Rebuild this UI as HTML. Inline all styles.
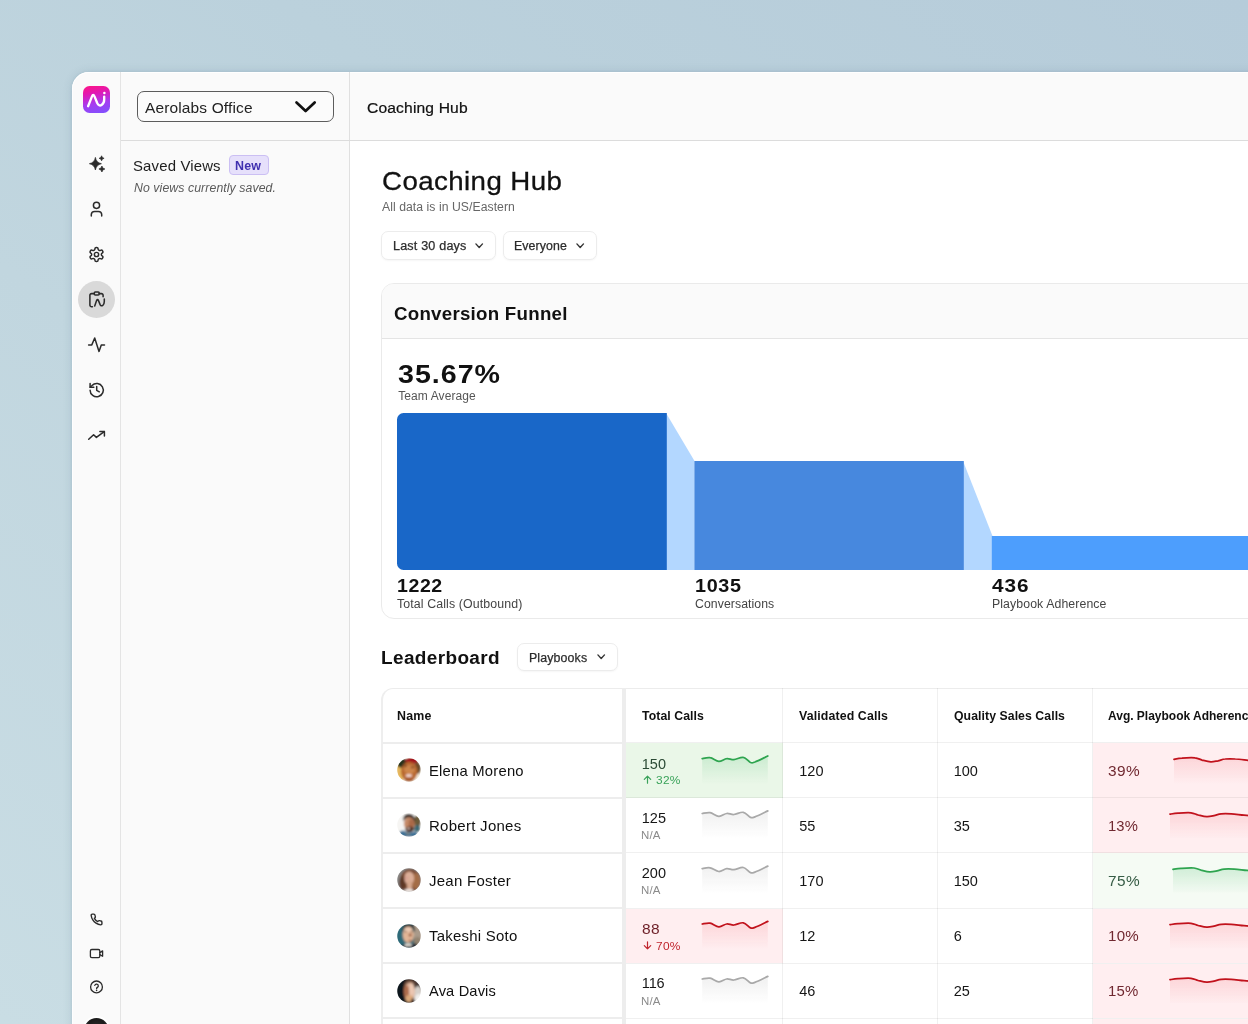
<!DOCTYPE html>
<html lang="en">
<head>
<meta charset="utf-8">
<title>Coaching Hub</title>
<style>
*{box-sizing:border-box;margin:0;padding:0}
html,body{width:1248px;height:1024px;overflow:hidden}
body{font-family:"Liberation Sans",Arial,sans-serif;color:#111;background:linear-gradient(38deg,#c9dde4 0%,#c1d6df 38%,#bbd1dc 62%,#b6ccda 100%);position:relative}
.abs{position:absolute}
.t{position:absolute;white-space:nowrap;line-height:1}
#win{position:absolute;left:72px;top:72px;width:1300px;height:1100px;background:#fafafa;border-radius:17px 0 0 0;box-shadow:0 0 10px rgba(50,85,115,.15),0 0 3px rgba(50,85,115,.09),inset 0 1px 0 #fff,inset 1px 0 0 rgba(255,255,255,.8);overflow:hidden}
#rail{position:absolute;left:0;top:0;width:49px;height:100%;border-right:1px solid #e4e4e4}
#side{position:absolute;left:49px;top:0;width:229px;height:100%;border-right:1px solid #e0e0e0}
#topbar{position:absolute;left:49px;top:0;right:0;height:69px;border-bottom:1px solid #dcdcdc}
#main{position:absolute;left:278px;top:69px;right:0;bottom:0;background:#fff}
svg{position:absolute;overflow:visible}
.btn{border:1px solid #ececec;border-radius:7px;background:#fff;box-shadow:0 1px 2px rgba(0,0,0,.04)}
.ic{fill:none;stroke:#2b2b2b;stroke-linecap:round;stroke-linejoin:round}
</style>
</head>
<body>
<div id="win">
  <div id="main"></div>
  <div id="rail"></div>
  <div id="side"></div>
  <div id="topbar"></div>
</div>
<div id="layer" style="position:absolute;left:0;top:0;width:1248px;height:1024px;will-change:transform">
<!-- SECTION:RAIL -->
<div class="abs" style="left:83px;top:86px;width:27px;height:27px;border-radius:6.5px;background:linear-gradient(168deg,#ff1583 0%,#e019b4 30%,#a63cf0 62%,#7d52ff 100%)"></div>
<svg style="left:83px;top:86px" width="27" height="27" viewBox="83 86 27 27"><path d="M88.1,106.2 L91.9,96.6 Q93.2,93.4 94.6,96.6 L97.2,103 Q98.9,106.6 101.6,105 Q104.2,103.4 104.2,99.6 L104.2,96.6" fill="none" stroke="#fff" stroke-width="2.35" stroke-linecap="round" stroke-linejoin="round"/><circle cx="104.4" cy="93" r="1.25" fill="#fff"/></svg>
<!-- sparkles -->
<svg style="left:88px;top:155px" width="18" height="18" viewBox="88 155 18 18"><path d="M95.4,157.4 Q96.3,162.6 101.4,163.7 Q96.3,164.8 95.4,170 Q94.5,164.8 89.4,163.7 Q94.5,162.6 95.4,157.4Z M101.6,155.8 Q101.9,158 104.1,158.3 Q101.9,158.6 101.6,160.8 Q101.3,158.6 99.1,158.3 Q101.3,158 101.6,155.8Z M101.9,166 Q102.3,168.6 104.9,169 Q102.3,169.4 101.9,172 Q101.5,169.4 98.9,169 Q101.5,168.6 101.9,166Z" fill="#2a2a2a" stroke="#2a2a2a" stroke-width=".7" stroke-linejoin="round"/></svg>
<!-- user -->
<svg style="left:88px;top:200px" width="18" height="18" viewBox="88 200 18 18"><g class="ic" stroke-width="1.5"><circle cx="96.5" cy="205.3" r="3.1"/><path d="M91.3,216 V214.6 A3.3,3.3 0 0 1 94.6,211.4 H98.4 A3.3,3.3 0 0 1 101.7,214.6 V216"/></g></svg>
<!-- gear -->
<svg style="left:88px;top:246px" width="17" height="17" viewBox="0 0 24 24"><g class="ic" stroke-width="2.1"><path d="M12.22 2h-.44a2 2 0 0 0-2 2v.18a2 2 0 0 1-1 1.73l-.43.25a2 2 0 0 1-2 0l-.15-.08a2 2 0 0 0-2.73.73l-.22.38a2 2 0 0 0 .73 2.73l.15.1a2 2 0 0 1 1 1.72v.51a2 2 0 0 1-1 1.74l-.15.09a2 2 0 0 0-.73 2.73l.22.38a2 2 0 0 0 2.73.73l.15-.08a2 2 0 0 1 2 0l.43.25a2 2 0 0 1 1 1.73V20a2 2 0 0 0 2 2h.44a2 2 0 0 0 2-2v-.18a2 2 0 0 1 1-1.73l.43-.25a2 2 0 0 1 2 0l.15.08a2 2 0 0 0 2.73-.73l.22-.39a2 2 0 0 0-.73-2.73l-.15-.08a2 2 0 0 1-1-1.74v-.5a2 2 0 0 1 1-1.74l.15-.09a2 2 0 0 0 .73-2.73l-.22-.38a2 2 0 0 0-2.73-.73l-.15.08a2 2 0 0 1-2 0l-.43-.25a2 2 0 0 1-1-1.73V4a2 2 0 0 0-2-2z"/><circle cx="12" cy="12" r="3"/></g></svg>
<!-- active clipboard -->
<div class="abs" style="left:78px;top:281px;width:37px;height:37px;border-radius:50%;background:#d9d9d9"></div>
<svg style="left:87px;top:289px" width="20" height="20" viewBox="87 289 20 20"><g class="ic" stroke-width="1.55"><path d="M94.3,293.6 H91.6 A1.7,1.7 0 0 0 89.9,295.3 V305 A1.7,1.7 0 0 0 91.6,306.7 H92.4"/><path d="M99.2,293.6 H101.4 A1.7,1.7 0 0 1 103.1,295.3 V296.8"/><rect x="94.3" y="292" width="4.9" height="2.9" rx="1"/><path d="M94.7,305.9 L96.6,300.6 Q97.5,298.6 98.5,300.6 L100,304.4 Q101,306.6 102.8,305.4 Q104.3,304.2 104.3,301.6 V299"/></g></svg>
<!-- activity -->
<svg style="left:87px;top:336px" width="20" height="18" viewBox="87 336 20 18"><path class="ic" stroke-width="1.5" d="M88.6,344.9 H91.8 L94.7,338 L99,351.4 L101.3,344.9 H104.5"/></svg>
<!-- history -->
<svg style="left:88px;top:381px" width="18" height="18" viewBox="88 381 18 18"><g class="ic" stroke-width="1.5"><path d="M90.1,390.2 A6.6,6.6 0 1 0 92,385.5 L90.1,387.3"/><path d="M90.1,383.6 V387.3 H93.8"/><path d="M96.7,386.6 V390.3 L99.3,391.8"/></g></svg>
<!-- trending up -->
<svg style="left:87px;top:428px" width="20" height="14" viewBox="87 428 20 14"><g class="ic" stroke-width="1.5"><path d="M88.7,439.3 L93.6,434.7 L96.4,437.4 L104.2,431.6"/><path d="M99.9,431.4 H104.4 V435.9"/></g></svg>
<!-- phone -->
<svg style="left:90px;top:913px" width="13" height="13" viewBox="0 0 24 24"><path class="ic" stroke-width="2.6" d="M22 16.92v3a2 2 0 0 1-2.18 2 19.79 19.79 0 0 1-8.63-3.07 19.5 19.5 0 0 1-6-6 19.79 19.79 0 0 1-3.07-8.67A2 2 0 0 1 4.11 2h3a2 2 0 0 1 2 1.720c.127.96.361 1.903.7 2.810a2 2 0 0 1-.45 2.110L8.090 9.910a16 16 0 0 0 6 6l1.270-1.270a2 2 0 0 1 2.110-.45c.907.339 1.850.573 2.810.7A2 2 0 0 1 22 16.920z"/></svg>
<!-- video -->
<svg style="left:89px;top:947px" width="16" height="13" viewBox="89 947 16 13"><g class="ic" stroke-width="1.3"><rect x="90.4" y="949.5" width="9.4" height="8.2" rx="1.4"/><path d="M99.8,952.6 L102.6,950.9 V956.3 L99.8,954.6"/></g></svg>
<!-- help -->
<svg style="left:89px;top:979px" width="16" height="16" viewBox="89 979 16 16"><g class="ic" stroke-width="1.3"><circle cx="96.5" cy="986.9" r="5.9"/><path d="M94.8,985.4 A1.8,1.8 0 0 1 98.3,986 C98.3,987.2 96.6,987.5 96.6,988.5"/></g><circle cx="96.6" cy="990.4" r=".8" fill="#2b2b2b"/></svg>
<!-- bottom avatar -->
<div class="abs" style="left:82px;top:1015.5px;width:29px;height:29px;border-radius:50%;border:2px solid #fff;background:radial-gradient(circle at 50% 35%,#2a2a2a 0,#1a1a1a 40%,#4a4a4a 70%,#8a8a8a 100%)"></div>
<!-- SECTION:SIDE -->
<div class="abs" style="left:137px;top:91px;width:197px;height:31px;border:1.2px solid #5c5c5c;border-radius:7px;background:#fbfbfb"></div>
<span class="t" id="t1" style="letter-spacing:0.140px;transform:scaleX(1.0318);transform-origin:0 0;left:145.3px;top:100.00px;font-size:15px;color:#222;">Aerolabs Office</span>
<svg style="left:294.6px;top:100.7px" width="21.2" height="11.6" viewBox="0 0 21.2 11.6"><path d="M1.5,1.5 L10.6,10.1 L19.7,1.5" fill="none" stroke="#111" stroke-width="2.7" stroke-linecap="round" stroke-linejoin="round"/></svg>
<span class="t" id="t3" style="letter-spacing:0.146px;transform:scaleX(1.0297);transform-origin:0 0;left:132.50px;top:158.83px;font-size:14.5px;color:#1d1d1d;">Saved Views</span>
<div class="abs" style="left:229px;top:154.6px;width:40px;height:20px;border:1px solid #cbbff3;border-radius:4px;background:#e6e0fb"></div>
<span class="t" id="t4" style="letter-spacing:0.195px;transform:scaleX(1.0368);transform-origin:0 0;left:234.50px;top:159.84px;font-size:12px;font-weight:700;color:#4030b0;">New</span>
<span class="t" id="t5" style="letter-spacing:0.083px;transform:scaleX(1.0232);transform-origin:0 0;left:133.5px;top:181.84px;font-size:12px;font-style:italic;color:#5a5a5a;">No views currently saved.</span>
<!-- SECTION:HEADER -->
<span class="t" id="t2" style="letter-spacing:0.147px;transform:scaleX(1.0284);transform-origin:0 0;left:366.6px;top:100.03px;font-size:15.2px;color:#111;-webkit-text-stroke:.22px #111;">Coaching Hub</span>
<span class="t" id="t6" style="letter-spacing:0.394px;transform:scaleX(1.0441);transform-origin:0 0;left:381.70px;top:168.27px;font-size:26.5px;color:#111;-webkit-text-stroke:.3px #111;">Coaching Hub</span>
<span class="t" id="t7" style="letter-spacing:0.055px;transform:scaleX(1.0162);transform-origin:0 0;left:381.80px;top:200.94px;font-size:12px;color:#666;">All data is in US/Eastern</span>
<div class="abs btn" style="left:381.4px;top:230.7px;width:114.2px;height:29px"></div>
<div class="abs btn" style="left:502.5px;top:230.7px;width:94.2px;height:29px"></div>
<span class="t" id="t8" style="letter-spacing:0.173px;transform:scaleX(1.0481);transform-origin:0 0;left:393.30px;top:240.04px;font-size:12px;color:#2c2c2c;-webkit-text-stroke:.25px #2c2c2c;">Last 30 days</span>
<span class="t" id="t9" style="letter-spacing:0.112px;transform:scaleX(1.0272);transform-origin:0 0;left:514.40px;top:240.04px;font-size:12px;color:#2c2c2c;-webkit-text-stroke:.25px #2c2c2c;">Everyone</span>
<svg style="left:475.4px;top:242.6px" width="8.4" height="5.4" viewBox="0 0 8.4 5.4"><path d="M0.8999999999999999,0.8999999999999999 L4.2,4.5 L7.5,0.8999999999999999" fill="none" stroke="#333" stroke-width="1.4" stroke-linecap="round" stroke-linejoin="round"/></svg>
<svg style="left:576px;top:242.6px" width="8.4" height="5.4" viewBox="0 0 8.4 5.4"><path d="M0.8999999999999999,0.8999999999999999 L4.2,4.5 L7.5,0.8999999999999999" fill="none" stroke="#333" stroke-width="1.4" stroke-linecap="round" stroke-linejoin="round"/></svg>
<!-- SECTION:FUNNEL -->
<div class="abs" style="left:380.5px;top:282.5px;width:900px;height:336px;border:1px solid #eaeaea;border-radius:13px;background:#fff;overflow:hidden"><div style="height:55px;background:#fafafa;border-bottom:1px solid #e4e4e4"></div></div>
<span class="t" id="t10" style="letter-spacing:0.242px;transform:scaleX(1.0393);transform-origin:0 0;left:393.70px;top:304.96px;font-size:18px;font-weight:700;color:#111;">Conversion Funnel</span>
<span class="t" id="t11" style="letter-spacing:0.897px;transform:scaleX(1.1008);transform-origin:0 0;left:397.60px;top:360.99px;font-size:26px;font-weight:700;color:#111;">35.67%</span>
<span class="t" id="t12" style="letter-spacing:0.100px;left:398.20px;top:389.84px;font-size:12px;color:#555;">Team Average</span>
<svg style="left:397px;top:413px" width="860" height="157" viewBox="397 413 860 157">
<path d="M666,413 L694.5,461 L694.5,570 L666,570Z" fill="#b3d7ff"/>
<path d="M963,461 L992.5,536 L992.5,570 L963,570Z" fill="#b3d7ff"/>
<path d="M403.5,413 H666.8 V570 H403.5 A6.5,6.5 0 0 1 397,563.5 V419.5 A6.5,6.5 0 0 1 403.500,413Z" fill="#1967c8"/>
<rect x="694.4" y="461" width="269.400" height="109" fill="#4788de"/>
<rect x="991.8" y="536" width="270" height="34" fill="#4d9efd"/>
</svg>
<span class="t" id="t13" style="letter-spacing:0.530px;transform:scaleX(1.0862);transform-origin:0 0;left:396.80px;top:577.46px;font-size:18px;font-weight:700;color:#111;">1222</span>
<span class="t" id="t14" style="letter-spacing:0.108px;transform:scaleX(1.0307);transform-origin:0 0;left:397.3px;top:598.14px;font-size:12px;color:#444;">Total Calls (Outbound)</span>
<span class="t" id="t15" style="letter-spacing:0.605px;transform:scaleX(1.0997);transform-origin:0 0;left:694.80px;top:577.46px;font-size:18px;font-weight:700;color:#111;">1035</span>
<span class="t" id="t16" style="letter-spacing:0.078px;transform:scaleX(1.0202);transform-origin:0 0;left:695.3px;top:598.14px;font-size:12px;color:#444;">Conversations</span>
<span class="t" id="t17" style="letter-spacing:0.885px;transform:scaleX(1.1528);transform-origin:0 0;left:992.30px;top:577.46px;font-size:18px;font-weight:700;color:#111;">436</span>
<span class="t" id="t18" style="letter-spacing:0.096px;transform:scaleX(1.0240);transform-origin:0 0;left:992.3px;top:598.14px;font-size:12px;color:#444;">Playbook Adherence</span>
<!-- SECTION:TABLE -->
<span class="t" id="t19" style="letter-spacing:0.344px;transform:scaleX(1.0549);transform-origin:0 0;left:381.2px;top:648.66px;font-size:18px;font-weight:700;color:#111;">Leaderboard</span>
<div class="abs btn" style="left:517.1px;top:642.8px;width:100.5px;height:28.6px"></div>
<span class="t" id="t20" style="letter-spacing:0.122px;transform:scaleX(1.0306);transform-origin:0 0;left:529.2px;top:651.84px;font-size:12px;color:#2c2c2c;-webkit-text-stroke:.25px #2c2c2c;">Playbooks</span>
<svg style="left:596.6px;top:654.4px" width="8.4" height="5.4" viewBox="0 0 8.4 5.4"><path d="M0.8999999999999999,0.8999999999999999 L4.2,4.5 L7.5,0.8999999999999999" fill="none" stroke="#333" stroke-width="1.4" stroke-linecap="round" stroke-linejoin="round"/></svg>
<div class="abs" style="left:380.8px;top:687.7px;width:900px;height:400px;border:1px solid #ececec;border-left:2px solid #eeeeee;border-top:1.6px solid #ececec;border-radius:12px 0 0 0;background:#fff"></div>
<div class="abs" style="left:625.5px;top:743.2px;width:157px;height:54.4px;background:#eaf7e8"></div>
<div class="abs" style="left:1092.5px;top:743.2px;width:200px;height:54.4px;background:#ffeef0"></div>
<div class="abs" style="left:1092.5px;top:798.1px;width:200px;height:54.5px;background:#ffeef0"></div>
<div class="abs" style="left:1092.5px;top:853.1px;width:200px;height:54.9px;background:#f5fbf4"></div>
<div class="abs" style="left:625.5px;top:908.5px;width:157px;height:54.7px;background:#ffeef0"></div>
<div class="abs" style="left:1092.5px;top:908.5px;width:200px;height:54.7px;background:#ffeef0"></div>
<div class="abs" style="left:1092.5px;top:963.7px;width:200px;height:54.3px;background:#ffeef0"></div>
<div class="abs" style="left:1092.5px;top:1018.5px;width:200px;height:10px;background:#ffeef0"></div>
<div class="abs" style="left:382px;top:741.7px;width:241px;height:2.3px;background:#ededed"></div>
<div class="abs" style="left:625px;top:742.2px;width:640px;height:1px;background:rgba(0,0,0,.06)"></div>
<div class="abs" style="left:382px;top:796.6px;width:241px;height:2.3px;background:#ededed"></div>
<div class="abs" style="left:625px;top:797.1px;width:640px;height:1px;background:rgba(0,0,0,.06)"></div>
<div class="abs" style="left:382px;top:851.6px;width:241px;height:2.3px;background:#ededed"></div>
<div class="abs" style="left:625px;top:852.1px;width:640px;height:1px;background:rgba(0,0,0,.06)"></div>
<div class="abs" style="left:382px;top:907.0px;width:241px;height:2.3px;background:#ededed"></div>
<div class="abs" style="left:625px;top:907.5px;width:640px;height:1px;background:rgba(0,0,0,.06)"></div>
<div class="abs" style="left:382px;top:962.2px;width:241px;height:2.3px;background:#ededed"></div>
<div class="abs" style="left:625px;top:962.7px;width:640px;height:1px;background:rgba(0,0,0,.06)"></div>
<div class="abs" style="left:382px;top:1017.0px;width:241px;height:2.3px;background:#ededed"></div>
<div class="abs" style="left:625px;top:1017.5px;width:640px;height:1px;background:rgba(0,0,0,.06)"></div>
<div class="abs" style="left:622px;top:688px;width:3.6px;height:340px;background:#ededed"></div>
<div class="abs" style="left:782.0px;top:688px;width:1px;height:340px;background:rgba(0,0,0,.06)"></div>
<div class="abs" style="left:936.5px;top:688px;width:1px;height:340px;background:rgba(0,0,0,.06)"></div>
<div class="abs" style="left:1091.5px;top:688px;width:1px;height:340px;background:rgba(0,0,0,.06)"></div>
<span class="t" id="h1" style="letter-spacing:0.175px;transform:scaleX(1.0333);transform-origin:0 0;left:397.2px;top:709.74px;font-size:12px;font-weight:700;color:#111;">Name</span>
<span class="t" id="h2" style="letter-spacing:0.078px;transform:scaleX(1.0221);transform-origin:0 0;left:641.9px;top:709.74px;font-size:12px;font-weight:700;color:#111;">Total Calls</span>
<span class="t" id="h3" style="letter-spacing:0.111px;transform:scaleX(1.0304);transform-origin:0 0;left:799px;top:709.74px;font-size:12px;font-weight:700;color:#111;">Validated Calls</span>
<span class="t" id="h4" style="letter-spacing:0.074px;transform:scaleX(1.0202);transform-origin:0 0;left:953.5px;top:709.74px;font-size:12px;font-weight:700;color:#111;">Quality Sales Calls</span>
<span class="t" id="h5" style="letter-spacing:-0.007px;left:1108px;top:709.74px;font-size:12px;font-weight:700;color:#111;">Avg. Playbook Adherence</span>
<svg width="0" height="0" style="left:0;top:0"><defs><linearGradient id="sgg" x1="0" y1="0" x2="0" y2="1"><stop offset="0" stop-color="#9fdcb0" stop-opacity=".42"/><stop offset="1" stop-color="#9fdcb0" stop-opacity="0"/></linearGradient><linearGradient id="sgr" x1="0" y1="0" x2="0" y2="1"><stop offset="0" stop-color="#f9b4b9" stop-opacity=".42"/><stop offset="1" stop-color="#f9b4b9" stop-opacity="0"/></linearGradient><linearGradient id="sgn" x1="0" y1="0" x2="0" y2="1"><stop offset="0" stop-color="#dcdcdc" stop-opacity=".42"/><stop offset="1" stop-color="#dcdcdc" stop-opacity="0"/></linearGradient></defs></svg>
<span class="t" id="n0" style="letter-spacing:0.206px;transform:scaleX(1.0438);transform-origin:0 0;left:429.0px;top:764.03px;font-size:14.2px;color:#101010;">Elena Moreno</span>
<span class="t" id="a0" style="left:641.8px;top:756.58px;font-size:14.5px;color:#2b4a35;">150</span>
<svg style="left:642.5px;top:775.4px" width="9" height="9" viewBox="0 0 9 9"><path d="M4.5,8.200 V1.200 M1.3,4.300 L4.5,1.100 L7.7,4.300" fill="none" stroke="#3aa35a" stroke-width="1.2" stroke-linecap="round" stroke-linejoin="round"/></svg>
<span class="t" id="b0" style="letter-spacing:0.250px;transform:scaleX(1.0524);transform-origin:0 0;left:655.6px;top:775.38px;font-size:11.3px;color:#3aa35a;">32%</span>
<span class="t" id="c0" style="left:799.3px;top:763.78px;font-size:14.5px;color:#161616;">120</span>
<span class="t" id="d0" style="left:953.7px;top:763.78px;font-size:14.5px;color:#161616;">100</span>
<span class="t" id="e0" style="letter-spacing:0.373px;transform:scaleX(1.0614);transform-origin:0 0;left:1107.6px;top:763.78px;font-size:14.5px;color:#702830;">39%</span>
<svg style="left:0;top:0" width="1248" height="1024"><path d="M702.2,758.6 C703.5,758.4 707.3,757.2 710.1,757.7 C712.9,758.1 716.0,761.2 718.8,761.4 C721.6,761.5 724.2,758.9 726.7,758.6 C729.2,758.2 731.1,759.8 733.9,759.6 C736.7,759.4 740.5,756.9 743.3,757.4 C746.1,757.8 748.6,761.7 750.5,762.5 C752.4,763.2 752.0,763.0 754.9,762.0 C757.8,760.9 765.6,757.0 767.8,756.0 L767.8,783.7 L702.2,783.7Z" fill="url(#sgg)"/><path d="M702.2,758.6 C703.5,758.4 707.3,757.2 710.1,757.7 C712.9,758.1 716.0,761.2 718.8,761.4 C721.6,761.5 724.2,758.9 726.7,758.6 C729.2,758.2 731.1,759.8 733.9,759.6 C736.7,759.4 740.5,756.9 743.3,757.4 C746.1,757.8 748.6,761.7 750.5,762.5 C752.4,763.2 752.0,763.0 754.9,762.0 C757.8,760.9 765.6,757.0 767.8,756.0" fill="none" stroke="#2ea44f" stroke-width="1.75" stroke-linecap="round"/><path d="M1174.0,759.3 C1175.3,759.1 1178.5,758.4 1182.0,758.2 C1185.5,757.9 1191.7,757.5 1195.0,757.9 C1198.3,758.2 1199.5,759.4 1202.1,760.1 C1204.7,760.7 1208.1,761.6 1210.8,761.8 C1213.5,761.9 1215.6,761.2 1218.0,760.8 C1220.4,760.3 1222.3,759.2 1225.2,759.0 C1228.1,758.7 1231.5,758.7 1235.3,759.0 C1239.1,759.2 1244.2,759.9 1248.0,760.3 C1251.8,760.6 1256.3,760.8 1258.0,761.0 L1258,783.7 L1174,783.7Z" fill="url(#sgr)"/><path d="M1174.0,759.3 C1175.3,759.1 1178.5,758.4 1182.0,758.2 C1185.5,757.9 1191.7,757.5 1195.0,757.9 C1198.3,758.2 1199.5,759.4 1202.1,760.1 C1204.7,760.7 1208.1,761.6 1210.8,761.8 C1213.5,761.9 1215.6,761.2 1218.0,760.8 C1220.4,760.3 1222.3,759.2 1225.2,759.0 C1228.1,758.7 1231.5,758.7 1235.3,759.0 C1239.1,759.2 1244.2,759.9 1248.0,760.3 C1251.8,760.6 1256.3,760.8 1258.0,761.0" fill="none" stroke="#c1121c" stroke-width="1.75" stroke-linecap="round"/></svg>
<span class="t" id="n1" style="letter-spacing:0.256px;transform:scaleX(1.0577);transform-origin:0 0;left:429.0px;top:818.98px;font-size:14.2px;color:#101010;">Robert Jones</span>
<span class="t" id="a1" style="left:641.8px;top:810.63px;font-size:14.5px;color:#161616;">125</span>
<span class="t" id="b1" style="letter-spacing:0.161px;transform:scaleX(1.0411);transform-origin:0 0;left:641.2px;top:830.09px;font-size:11px;color:#8a8a8a;">N/A</span>
<span class="t" id="c1" style="left:799.3px;top:818.73px;font-size:14.5px;color:#161616;">55</span>
<span class="t" id="d1" style="left:953.7px;top:818.73px;font-size:14.5px;color:#161616;">35</span>
<span class="t" id="e1" style="letter-spacing:0.127px;transform:scaleX(1.0200);transform-origin:0 0;left:1107.6px;top:818.73px;font-size:14.5px;color:#702830;">13%</span>
<svg style="left:0;top:0" width="1248" height="1024"><path d="M702.2,813.5 C703.5,813.4 707.3,812.1 710.1,812.6 C712.9,813.1 716.0,816.2 718.8,816.3 C721.6,816.5 724.2,813.8 726.7,813.5 C729.2,813.2 731.1,814.7 733.9,814.5 C736.7,814.3 740.5,811.8 743.3,812.3 C746.1,812.8 748.6,816.6 750.5,817.4 C752.4,818.2 752.0,818.0 754.9,816.9 C757.8,815.8 765.6,811.9 767.8,810.9 L767.8,838.6 L702.2,838.6Z" fill="url(#sgn)"/><path d="M702.2,813.5 C703.5,813.4 707.3,812.1 710.1,812.6 C712.9,813.1 716.0,816.2 718.8,816.3 C721.6,816.5 724.2,813.8 726.7,813.5 C729.2,813.2 731.1,814.7 733.9,814.5 C736.7,814.3 740.5,811.8 743.3,812.3 C746.1,812.8 748.6,816.6 750.5,817.4 C752.4,818.2 752.0,818.0 754.9,816.9 C757.8,815.8 765.6,811.9 767.8,810.9" fill="none" stroke="#a9a9a9" stroke-width="1.75" stroke-linecap="round"/><path d="M1170.0,814.2 C1171.3,814.0 1174.5,813.3 1178.0,813.1 C1181.5,812.9 1187.7,812.5 1191.0,812.8 C1194.3,813.1 1195.5,814.4 1198.1,815.0 C1200.7,815.6 1204.1,816.6 1206.8,816.7 C1209.5,816.8 1211.6,816.2 1214.0,815.7 C1216.4,815.2 1218.3,814.2 1221.2,813.9 C1224.1,813.6 1227.5,813.7 1231.3,813.9 C1235.1,814.1 1240.2,814.9 1244.0,815.2 C1247.8,815.5 1252.3,815.8 1254.0,815.9 L1254,838.6 L1170,838.6Z" fill="url(#sgr)"/><path d="M1170.0,814.2 C1171.3,814.0 1174.5,813.3 1178.0,813.1 C1181.5,812.9 1187.7,812.5 1191.0,812.8 C1194.3,813.1 1195.5,814.4 1198.1,815.0 C1200.7,815.6 1204.1,816.6 1206.8,816.7 C1209.5,816.8 1211.6,816.2 1214.0,815.7 C1216.4,815.2 1218.3,814.2 1221.2,813.9 C1224.1,813.6 1227.5,813.7 1231.3,813.9 C1235.1,814.1 1240.2,814.9 1244.0,815.2 C1247.8,815.5 1252.3,815.8 1254.0,815.9" fill="none" stroke="#c1121c" stroke-width="1.75" stroke-linecap="round"/></svg>
<span class="t" id="n2" style="letter-spacing:0.244px;transform:scaleX(1.0567);transform-origin:0 0;left:429.0px;top:874.18px;font-size:14.2px;color:#101010;">Jean Foster</span>
<span class="t" id="a2" style="left:641.8px;top:865.83px;font-size:14.5px;color:#161616;">200</span>
<span class="t" id="b2" style="letter-spacing:0.161px;transform:scaleX(1.0411);transform-origin:0 0;left:641.2px;top:885.29px;font-size:11px;color:#8a8a8a;">N/A</span>
<span class="t" id="c2" style="left:799.3px;top:873.93px;font-size:14.5px;color:#161616;">170</span>
<span class="t" id="d2" style="left:953.7px;top:873.93px;font-size:14.5px;color:#161616;">150</span>
<span class="t" id="e2" style="letter-spacing:0.373px;transform:scaleX(1.0614);transform-origin:0 0;left:1107.6px;top:873.93px;font-size:14.5px;color:#365c45;">75%</span>
<svg style="left:0;top:0" width="1248" height="1024"><path d="M702.2,868.7 C703.5,868.5 707.3,867.3 710.1,867.8 C712.9,868.3 716.0,871.4 718.8,871.5 C721.6,871.6 724.2,869.0 726.7,868.7 C729.2,868.4 731.1,869.9 733.9,869.7 C736.7,869.5 740.5,867.0 743.3,867.5 C746.1,868.0 748.6,871.8 750.5,872.6 C752.4,873.4 752.0,873.2 754.9,872.1 C757.8,871.0 765.6,867.1 767.8,866.1 L767.8,893.8 L702.2,893.8Z" fill="url(#sgn)"/><path d="M702.2,868.7 C703.5,868.5 707.3,867.3 710.1,867.8 C712.9,868.3 716.0,871.4 718.8,871.5 C721.6,871.6 724.2,869.0 726.7,868.7 C729.2,868.4 731.1,869.9 733.9,869.7 C736.7,869.5 740.5,867.0 743.3,867.5 C746.1,868.0 748.6,871.8 750.5,872.6 C752.4,873.4 752.0,873.2 754.9,872.1 C757.8,871.0 765.6,867.1 767.8,866.1" fill="none" stroke="#a9a9a9" stroke-width="1.75" stroke-linecap="round"/><path d="M1173.0,869.4 C1174.3,869.2 1177.5,868.5 1181.0,868.3 C1184.5,868.1 1190.7,867.7 1194.0,868.0 C1197.3,868.3 1198.5,869.5 1201.1,870.2 C1203.7,870.8 1207.1,871.8 1209.8,871.9 C1212.5,872.0 1214.6,871.4 1217.0,870.9 C1219.4,870.4 1221.3,869.4 1224.2,869.1 C1227.1,868.8 1230.5,868.9 1234.3,869.1 C1238.1,869.3 1243.2,870.1 1247.0,870.4 C1250.8,870.7 1255.3,871.0 1257.0,871.1 L1257,893.8 L1173,893.8Z" fill="url(#sgg)"/><path d="M1173.0,869.4 C1174.3,869.2 1177.5,868.5 1181.0,868.3 C1184.5,868.1 1190.7,867.7 1194.0,868.0 C1197.3,868.3 1198.5,869.5 1201.1,870.2 C1203.7,870.8 1207.1,871.8 1209.8,871.9 C1212.5,872.0 1214.6,871.4 1217.0,870.9 C1219.4,870.4 1221.3,869.4 1224.2,869.1 C1227.1,868.8 1230.5,868.9 1234.3,869.1 C1238.1,869.3 1243.2,870.1 1247.0,870.4 C1250.8,870.7 1255.3,871.0 1257.0,871.1" fill="none" stroke="#2ea44f" stroke-width="1.75" stroke-linecap="round"/></svg>
<span class="t" id="n3" style="letter-spacing:0.230px;transform:scaleX(1.0537);transform-origin:0 0;left:429.0px;top:929.48px;font-size:14.2px;color:#101010;">Takeshi Soto</span>
<span class="t" id="a3" style="letter-spacing:0.348px;transform:scaleX(1.0691);transform-origin:0 0;left:641.8px;top:922.03px;font-size:14.5px;color:#6e1f27;">88</span>
<svg style="left:642.5px;top:940.8px" width="9" height="9" viewBox="0 0 9 9"><path d="M4.5,0.800 V7.800 M1.3,4.700 L4.5,7.900 L7.7,4.700" fill="none" stroke="#c0242d" stroke-width="1.2" stroke-linecap="round" stroke-linejoin="round"/></svg>
<span class="t" id="b3" style="letter-spacing:0.250px;transform:scaleX(1.0524);transform-origin:0 0;left:655.6px;top:940.83px;font-size:11.3px;color:#c0242d;">70%</span>
<span class="t" id="c3" style="left:799.3px;top:929.23px;font-size:14.5px;color:#161616;">12</span>
<span class="t" id="d3" style="left:953.7px;top:929.23px;font-size:14.5px;color:#161616;">6</span>
<span class="t" id="e3" style="letter-spacing:0.252px;transform:scaleX(1.0407);transform-origin:0 0;left:1107.6px;top:929.23px;font-size:14.5px;color:#702830;">10%</span>
<svg style="left:0;top:0" width="1248" height="1024"><path d="M702.2,924.0 C703.5,923.9 707.3,922.6 710.1,923.1 C712.9,923.6 716.0,926.7 718.8,926.8 C721.6,927.0 724.2,924.3 726.7,924.0 C729.2,923.7 731.1,925.2 733.9,925.0 C736.7,924.8 740.5,922.3 743.3,922.8 C746.1,923.3 748.6,927.1 750.5,927.9 C752.4,928.7 752.0,928.5 754.9,927.4 C757.8,926.3 765.6,922.4 767.8,921.4 L767.8,949.1 L702.2,949.1Z" fill="url(#sgr)"/><path d="M702.2,924.0 C703.5,923.9 707.3,922.6 710.1,923.1 C712.9,923.6 716.0,926.7 718.8,926.8 C721.6,927.0 724.2,924.3 726.7,924.0 C729.2,923.7 731.1,925.2 733.9,925.0 C736.7,924.8 740.5,922.3 743.3,922.8 C746.1,923.3 748.6,927.1 750.5,927.9 C752.4,928.7 752.0,928.5 754.9,927.4 C757.8,926.3 765.6,922.4 767.8,921.4" fill="none" stroke="#c1121c" stroke-width="1.75" stroke-linecap="round"/><path d="M1170.0,924.7 C1171.3,924.5 1174.5,923.8 1178.0,923.6 C1181.5,923.4 1187.7,923.0 1191.0,923.3 C1194.3,923.6 1195.5,924.9 1198.1,925.5 C1200.7,926.1 1204.1,927.1 1206.8,927.2 C1209.5,927.3 1211.6,926.7 1214.0,926.2 C1216.4,925.7 1218.3,924.7 1221.2,924.4 C1224.1,924.1 1227.5,924.2 1231.3,924.4 C1235.1,924.6 1240.2,925.4 1244.0,925.7 C1247.8,926.0 1252.3,926.3 1254.0,926.4 L1254,949.1 L1170,949.1Z" fill="url(#sgr)"/><path d="M1170.0,924.7 C1171.3,924.5 1174.5,923.8 1178.0,923.6 C1181.5,923.4 1187.7,923.0 1191.0,923.3 C1194.3,923.6 1195.5,924.9 1198.1,925.5 C1200.7,926.1 1204.1,927.1 1206.8,927.2 C1209.5,927.3 1211.6,926.7 1214.0,926.2 C1216.4,925.7 1218.3,924.7 1221.2,924.4 C1224.1,924.1 1227.5,924.2 1231.3,924.4 C1235.1,924.6 1240.2,925.4 1244.0,925.7 C1247.8,926.0 1252.3,926.3 1254.0,926.4" fill="none" stroke="#c1121c" stroke-width="1.75" stroke-linecap="round"/></svg>
<span class="t" id="n4" style="letter-spacing:0.146px;transform:scaleX(1.0320);transform-origin:0 0;left:429.0px;top:984.48px;font-size:14.2px;color:#101010;">Ava Davis</span>
<span class="t" id="a4" style="letter-spacing:-0.142px;left:641.8px;top:976.13px;font-size:14.5px;color:#161616;">116</span>
<span class="t" id="b4" style="letter-spacing:0.161px;transform:scaleX(1.0411);transform-origin:0 0;left:641.2px;top:995.59px;font-size:11px;color:#8a8a8a;">N/A</span>
<span class="t" id="c4" style="left:799.3px;top:984.23px;font-size:14.5px;color:#161616;">46</span>
<span class="t" id="d4" style="left:953.7px;top:984.23px;font-size:14.5px;color:#161616;">25</span>
<span class="t" id="e4" style="letter-spacing:0.190px;transform:scaleX(1.0304);transform-origin:0 0;left:1107.6px;top:984.23px;font-size:14.5px;color:#702830;">15%</span>
<svg style="left:0;top:0" width="1248" height="1024"><path d="M702.2,979.0 C703.5,978.9 707.3,977.6 710.1,978.1 C712.9,978.6 716.0,981.7 718.8,981.8 C721.6,982.0 724.2,979.3 726.7,979.0 C729.2,978.7 731.1,980.2 733.9,980.0 C736.7,979.8 740.5,977.3 743.3,977.8 C746.1,978.3 748.6,982.1 750.5,982.9 C752.4,983.7 752.0,983.5 754.9,982.4 C757.8,981.3 765.6,977.4 767.8,976.4 L767.8,1004.1 L702.2,1004.1Z" fill="url(#sgn)"/><path d="M702.2,979.0 C703.5,978.9 707.3,977.6 710.1,978.1 C712.9,978.6 716.0,981.7 718.8,981.8 C721.6,982.0 724.2,979.3 726.7,979.0 C729.2,978.7 731.1,980.2 733.9,980.0 C736.7,979.8 740.5,977.3 743.3,977.8 C746.1,978.3 748.6,982.1 750.5,982.9 C752.4,983.7 752.0,983.5 754.9,982.4 C757.8,981.3 765.6,977.4 767.8,976.4" fill="none" stroke="#a9a9a9" stroke-width="1.75" stroke-linecap="round"/><path d="M1170.0,979.7 C1171.3,979.5 1174.5,978.8 1178.0,978.6 C1181.5,978.4 1187.7,978.0 1191.0,978.3 C1194.3,978.6 1195.5,979.9 1198.1,980.5 C1200.7,981.1 1204.1,982.1 1206.8,982.2 C1209.5,982.3 1211.6,981.7 1214.0,981.2 C1216.4,980.7 1218.3,979.7 1221.2,979.4 C1224.1,979.1 1227.5,979.2 1231.3,979.4 C1235.1,979.6 1240.2,980.4 1244.0,980.7 C1247.8,981.0 1252.3,981.3 1254.0,981.4 L1254,1004.1 L1170,1004.1Z" fill="url(#sgr)"/><path d="M1170.0,979.7 C1171.3,979.5 1174.5,978.8 1178.0,978.6 C1181.5,978.4 1187.7,978.0 1191.0,978.3 C1194.3,978.6 1195.5,979.9 1198.1,980.5 C1200.7,981.1 1204.1,982.1 1206.8,982.2 C1209.5,982.3 1211.6,981.7 1214.0,981.2 C1216.4,980.7 1218.3,979.7 1221.2,979.4 C1224.1,979.1 1227.5,979.2 1231.3,979.4 C1235.1,979.6 1240.2,980.4 1244.0,980.7 C1247.8,981.0 1252.3,981.3 1254.0,981.4" fill="none" stroke="#c1121c" stroke-width="1.75" stroke-linecap="round"/></svg>
<!-- AVATARS -->
<svg style="left:397.0px;top:758.1px" width="24" height="24" viewBox="-12 -12 24 24"><defs><clipPath id="ac0"><circle r="11.75"/></clipPath><filter id="ab0" x="-30%" y="-30%" width="160%" height="160%"><feGaussianBlur stdDeviation="1.25"/></filter></defs><g clip-path="url(#ac0)"><g filter="url(#ab0)"><rect x="-14" y="-14" width="28" height="28" fill="#f3ead8"/><rect x="-14" y="-6" width="8" height="20" fill="#e6b85e"/><ellipse cx="-7" cy="-7" rx="5.5" ry="5" fill="#27331f"/><ellipse cx="3" cy="-9.5" rx="7" ry="3.4" fill="#a3121a"/><ellipse cx="8.5" cy="-2" rx="3.6" ry="6" fill="#6b4a26"/><ellipse cx="0.2" cy="1.6" rx="8.3" ry="9.8" fill="#b8672f"/><ellipse cx="0.5" cy="-0.5" rx="5.5" ry="4.5" fill="#d08a50" opacity="0.9"/><ellipse cx="-3.6" cy="-4.2" rx="1.6" ry="0.9" fill="#6a3a1c"/><ellipse cx="3.4" cy="-2.6" rx="1.8" ry="0.9" fill="#7a3f22"/><ellipse cx="-0.2" cy="5.6" rx="3.2" ry="1.5" fill="#f3d7cf"/><ellipse cx="0" cy="9.6" rx="4.5" ry="2.2" fill="#a85a2c"/></g></g></svg>
<svg style="left:397.0px;top:813.0px" width="24" height="24" viewBox="-12 -12 24 24"><defs><clipPath id="ac1"><circle r="11.75"/></clipPath><filter id="ab1" x="-30%" y="-30%" width="160%" height="160%"><feGaussianBlur stdDeviation="1.25"/></filter></defs><g clip-path="url(#ac1)"><g filter="url(#ab1)"><rect x="-14" y="-14" width="28" height="28" fill="#f6f5f3"/><ellipse cx="8.4" cy="-3.5" rx="3.6" ry="6.5" fill="#6b5a37"/><ellipse cx="8.2" cy="3.5" rx="3.2" ry="3.6" fill="#3d6b76"/><ellipse cx="0.3" cy="-1.2" rx="5.4" ry="6.8" fill="#c58a68"/><ellipse cx="2.6" cy="-0.8" rx="3" ry="5.5" fill="#a3603f" opacity="0.8"/><path d="M-6,-3.500 Q-6.500,-11.200 0,-11.300 Q6.500,-11 6,-3 Q4,-7.800 0,-7.800 Q-4,-7.600 -6,-3.500Z" fill="#33201a"/><ellipse cx="0.6" cy="4.3" rx="4.2" ry="2.8" fill="#4a2b20"/><ellipse cx="-0.4" cy="3.6" rx="1.6" ry="0.8" fill="#e8d0c4"/><path d="M-11,12 Q-10,4.500 -5,5.800 Q0,8.500 5,6.500 Q9,6 9,12Z" fill="#3f7296"/><ellipse cx="-1" cy="8.6" rx="2.6" ry="1.2" fill="#8a8478" opacity="0.8"/></g></g></svg>
<svg style="left:397.0px;top:868.2px" width="24" height="24" viewBox="-12 -12 24 24"><defs><clipPath id="ac2"><circle r="11.75"/></clipPath><filter id="ab2" x="-30%" y="-30%" width="160%" height="160%"><feGaussianBlur stdDeviation="1.25"/></filter></defs><g clip-path="url(#ac2)"><g filter="url(#ab2)"><rect x="-14" y="-14" width="28" height="28" fill="#8a8886"/><ellipse cx="1.2" cy="0.5" rx="10.3" ry="11.6" fill="#7a4a30"/><ellipse cx="7" cy="1" rx="4.5" ry="8" fill="#a9714a" opacity="0.9"/><ellipse cx="-6.6" cy="3" rx="3.2" ry="7" fill="#5a3628" opacity="0.9"/><ellipse cx="0.2" cy="-2" rx="4.9" ry="6.6" fill="#dcae98"/><ellipse cx="0.6" cy="5.5" rx="2.6" ry="5" fill="#d6a88e"/><ellipse cx="-2.4" cy="-2" rx="1.8" ry="1.6" fill="#d79a92" opacity="0.7"/><path d="M-5,12 Q-4,8 0.500,9 Q4,8 4.600,12Z" fill="#ece4e0"/></g></g></svg>
<svg style="left:397.0px;top:923.5px" width="24" height="24" viewBox="-12 -12 24 24"><defs><clipPath id="ac3"><circle r="11.75"/></clipPath><filter id="ab3" x="-30%" y="-30%" width="160%" height="160%"><feGaussianBlur stdDeviation="1.25"/></filter></defs><g clip-path="url(#ac3)"><g filter="url(#ab3)"><rect x="-14" y="-14" width="28" height="28" fill="#2f6a78"/><rect x="5" y="-14" width="10" height="28" fill="#a99a8a"/><ellipse cx="8.5" cy="6" rx="4" ry="5" fill="#8d7d68" opacity="0.8"/><path d="M-7,-4 Q-7,-12 0,-12 Q6.500,-12 6,-4 Q4,-9.300 -0.500,-9.500 Q-5,-9 -7,-4Z" fill="#33261f"/><ellipse cx="-0.6" cy="-1.2" rx="5.6" ry="8.3" fill="#e2b596"/><ellipse cx="-1" cy="-6.4" rx="3.8" ry="2.3" fill="#f0cdb6" opacity="0.9"/><ellipse cx="1.2" cy="-1" rx="1.6" ry="1.5" fill="#8a4a2a" opacity="0.85"/><ellipse cx="-3.4" cy="-4.4" rx="1.7" ry="0.8" fill="#8a6a55" opacity="0.8"/><ellipse cx="2.6" cy="-4.4" rx="1.7" ry="0.8" fill="#8a6a55" opacity="0.8"/><ellipse cx="1.2" cy="4.6" rx="1.8" ry="0.9" fill="#8a4f35" opacity="0.8"/><path d="M-8,12 L-7,8.500 L-3.500,8.800 L-0.500,11 L3,8 L7.500,7.500 L9,12Z" fill="#272c35"/><ellipse cx="-0.8" cy="9" rx="3.6" ry="1.5" fill="#ece5dc"/><ellipse cx="-0.5" cy="10.6" rx="1.2" ry="0.9" fill="#3a2420"/></g></g></svg>
<svg style="left:397.0px;top:978.5px" width="24" height="24" viewBox="-12 -12 24 24"><defs><clipPath id="ac4"><circle r="11.75"/></clipPath><filter id="ab4" x="-30%" y="-30%" width="160%" height="160%"><feGaussianBlur stdDeviation="1.25"/></filter></defs><g clip-path="url(#ac4)"><g filter="url(#ab4)"><rect x="-14" y="-14" width="28" height="28" fill="#0f161d"/><rect x="5" y="-14" width="10" height="28" fill="#3b3230"/><ellipse cx="9" cy="4" rx="4.5" ry="9" fill="#d6d0ca"/><ellipse cx="10" cy="8" rx="4" ry="5" fill="#f2f0ee"/><ellipse cx="0.4" cy="0.5" rx="5.4" ry="10.4" fill="#e3b89f"/><ellipse cx="-2.6" cy="0.5" rx="2.8" ry="6.5" fill="#a55f3f" opacity="0.85"/><ellipse cx="2.8" cy="-1.5" rx="2.6" ry="6" fill="#ecc9b4" opacity="0.9"/><ellipse cx="0" cy="7.5" rx="3.6" ry="3.6" fill="#dba878" opacity="0.9"/><path d="M-5,-4 Q-5,-11.500 1,-11.500 Q7,-11 7.500,-4 Q5.500,-8 2,-8.500 Q-2,-8.500 -5,-4Z" fill="#6b4a38"/><ellipse cx="3.4" cy="9.4" rx="1.6" ry="2" fill="#5a3a26" opacity="0.8"/></g></g></svg>
<!-- END -->
</div>
</body>
</html>
